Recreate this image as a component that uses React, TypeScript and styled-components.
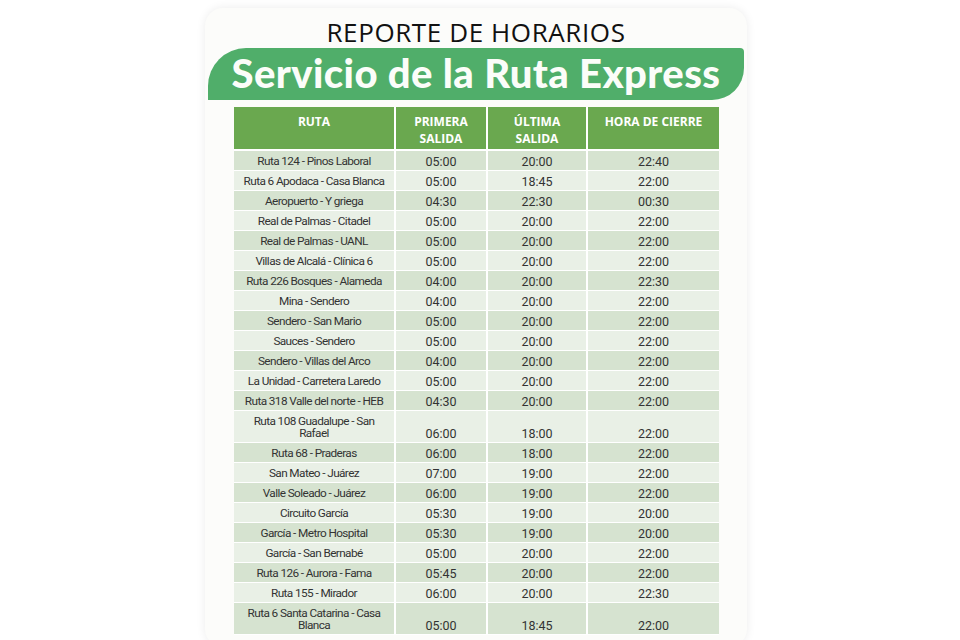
import React from 'react';
import styled, { createGlobalStyle } from 'styled-components';

const GlobalStyle = createGlobalStyle`
  html, body {
    margin: 0;
    padding: 0;
    background: #ffffff;
  }
  body {
    font-family: "Open Sans", "Liberation Sans", sans-serif;
    overflow: hidden;
  }
`;

const Page = styled.div`
  width: 960px;
  height: 640px;
  overflow: hidden;
`;

const Card = styled.div`
  width: 542px;
  margin: 8px 0 0 205px;
  padding: 8px 0 12px;
  background: #fcfcfa;
  border-radius: 18px;
  box-shadow: 0 0 10px rgba(0, 0, 0, 0.08);
`;

const Title = styled.h1`
  margin: 0;
  font-family: "Open Sans", "Liberation Sans", sans-serif;
  font-size: 26px;
  line-height: 32px;
  font-weight: 500;
  color: #111;
  text-align: center;
  letter-spacing: 0.6px;
`;

const Banner = styled.div`
  margin: 0 3px 0 3px;
  height: 52px;
  background: #50ae6a;
  border-radius: 38px 4px 32px 0;
  display: flex;
  align-items: center;
  justify-content: center;
`;

const BannerText = styled.span`
  font-family: "Lato", "Open Sans", sans-serif;
  font-weight: 900;
  font-size: 40px;
  color: #fbfdf9;
  letter-spacing: 0.4px;
  line-height: 1;
  margin-top: -2px;
`;

const Table = styled.table`
  width: 485px;
  margin: 7px 0 0 29px;
  border-collapse: collapse;
  table-layout: fixed;
  font-family: "Roboto", "Liberation Sans", sans-serif;
`;

const HeadCell = styled.th<{ $w: number }>`
  width: ${p => p.$w}px;
  height: 43px;
  padding: 6px 4px 0;
  box-sizing: border-box;
  vertical-align: top;
  background: #6aa84f;
  color: #ffffff;
  font-family: "Open Sans", "Liberation Sans", sans-serif;
  font-size: 12px;
  line-height: 17px;
  font-weight: 700;
  text-align: center;
  border-right: 2px solid #ffffff;
  border-bottom: 2px solid #ffffff;
  &:last-child {
    border-right: none;
  }
`;

const Row = styled.tr<{ $dark: boolean }>`
  background: ${p => (p.$dark ? '#d6e3d0' : '#e9f0e6')};
`;

const RouteCell = styled.td`
  padding: 4px 2px 3px;
  font-size: 11.8px;
  line-height: 12px;
  color: #333;
  text-align: center;
  vertical-align: middle;
  letter-spacing: -0.6px;
  white-space: pre-line;
  border-right: 2px solid #ffffff;
  border-bottom: 1px solid #ffffff;
`;

const TimeCell = styled.td`
  padding: 4px 2px 1px;
  font-size: 12.5px;
  line-height: 14px;
  color: #333;
  text-align: center;
  vertical-align: bottom;
  border-right: 2px solid #ffffff;
  border-bottom: 1px solid #ffffff;
  &:last-child {
    border-right: none;
  }
`;

const rows: [string, string, string, string][] = [
  ['Ruta 124 - Pinos Laboral', '05:00', '20:00', '22:40'],
  ['Ruta 6 Apodaca - Casa Blanca', '05:00', '18:45', '22:00'],
  ['Aeropuerto - Y griega', '04:30', '22:30', '00:30'],
  ['Real de Palmas - Citadel', '05:00', '20:00', '22:00'],
  ['Real de Palmas - UANL', '05:00', '20:00', '22:00'],
  ['Villas de Alcalá - Clínica 6', '05:00', '20:00', '22:00'],
  ['Ruta 226 Bosques - Alameda', '04:00', '20:00', '22:30'],
  ['Mina - Sendero', '04:00', '20:00', '22:00'],
  ['Sendero - San Mario', '05:00', '20:00', '22:00'],
  ['Sauces - Sendero', '05:00', '20:00', '22:00'],
  ['Sendero - Villas del Arco', '04:00', '20:00', '22:00'],
  ['La Unidad - Carretera Laredo', '05:00', '20:00', '22:00'],
  ['Ruta 318 Valle del norte - HEB', '04:30', '20:00', '22:00'],
  ['Ruta 108 Guadalupe - San\nRafael', '06:00', '18:00', '22:00'],
  ['Ruta 68 - Praderas', '06:00', '18:00', '22:00'],
  ['San Mateo - Juárez', '07:00', '19:00', '22:00'],
  ['Valle Soleado - Juárez', '06:00', '19:00', '22:00'],
  ['Circuito García', '05:30', '19:00', '20:00'],
  ['García - Metro Hospital', '05:30', '19:00', '20:00'],
  ['García - San Bernabé', '05:00', '20:00', '22:00'],
  ['Ruta 126 - Aurora - Fama', '05:45', '20:00', '22:00'],
  ['Ruta 155 - Mirador', '06:00', '20:00', '22:30'],
  ['Ruta 6 Santa Catarina - Casa\nBlanca', '05:00', '18:45', '22:00'],
];

const App = () => (
  <Page>
    <GlobalStyle />
    <Card>
      <Title>REPORTE DE HORARIOS</Title>
      <Banner>
        <BannerText>Servicio de la Ruta Express</BannerText>
      </Banner>
      <Table>
        <thead>
          <tr>
            <HeadCell $w={161}>RUTA</HeadCell>
            <HeadCell $w={92}>PRIMERA<br />SALIDA</HeadCell>
            <HeadCell $w={100}>ÚLTIMA<br />SALIDA</HeadCell>
            <HeadCell $w={132}>HORA DE CIERRE</HeadCell>
          </tr>
        </thead>
        <tbody>
          {rows.map(([ruta, primera, ultima, cierre], i) => (
            <Row key={ruta} $dark={i % 2 === 0}>
              <RouteCell>{ruta}</RouteCell>
              <TimeCell>{primera}</TimeCell>
              <TimeCell>{ultima}</TimeCell>
              <TimeCell>{cierre}</TimeCell>
            </Row>
          ))}
        </tbody>
      </Table>
    </Card>
  </Page>
);

export default App;
